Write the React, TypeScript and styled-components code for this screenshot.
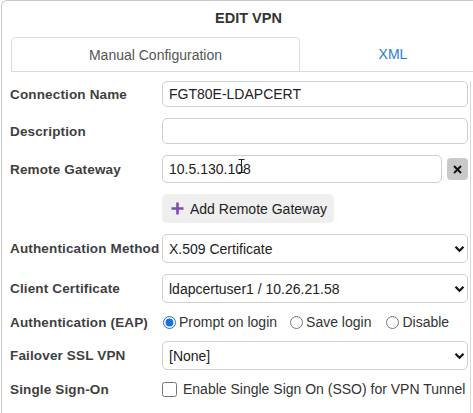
import styled, { createGlobalStyle } from 'styled-components';

const GlobalStyle = createGlobalStyle`
  html, body {
    margin: 0;
    padding: 0;
    background: #fff;
    overflow: hidden;
  }
  body {
    font-family: "Liberation Sans", Arial, sans-serif;
  }
`;

function Chevron() {
  return (
    <svg width="11" height="8" viewBox="0 0 11 8">
      <path d="M1.5 1.8 L5.5 5.8 L9.5 1.8" fill="none" stroke="#111" strokeWidth="2.2" />
    </svg>
  );
}

function Select({ value }: { value: string }) {
  return (
    <SelectWrap>
      <StyledSelect value={value} onChange={() => {}}>
        <option>{value}</option>
      </StyledSelect>
      <Arrow>
        <Chevron />
      </Arrow>
    </SelectWrap>
  );
}

function App() {
  return (
    <>
      <GlobalStyle />
      <Dialog>
        <Title>EDIT VPN</Title>
        <TabBar>
          <Tab $active>Manual Configuration</Tab>
          <Tab>XML</Tab>
        </TabBar>
        <FormBody>
          <Row>
            <Label>Connection Name</Label>
            <TextInput defaultValue="FGT80E-LDAPCERT" />
          </Row>
          <Row>
            <Label>Description</Label>
            <TextInput defaultValue="" />
          </Row>
          <Row>
            <Label>Remote Gateway</Label>
            <GatewayLine>
              <TextInput $h={28} defaultValue="10.5.130.108" />
              <RemoveButton>
                <svg width="9" height="9" viewBox="0 0 9 9">
                  <path d="M1 1 L8 8 M8 1 L1 8" stroke="#111" strokeWidth="2" />
                </svg>
              </RemoveButton>
              <Caret>
                <svg width="7" height="14" viewBox="0 0 7 14">
                  <path d="M0.5 0.5 H6.5 M3.5 0.5 V13.5 M0.5 13.5 H6.5" stroke="#222" strokeWidth="1" fill="none" />
                </svg>
              </Caret>
            </GatewayLine>
          </Row>
          <Row>
            <span />
            <div>
              <AddButton>
                <svg width="13" height="13" viewBox="0 0 13 13">
                  <path d="M6.5 0.5 V12.5 M0.5 6.5 H12.5" stroke="#7a4fae" strokeWidth="2.6" />
                </svg>
                Add Remote Gateway
              </AddButton>
            </div>
          </Row>
          <Row>
            <Label>Authentication Method</Label>
            <Select value="X.509 Certificate" />
          </Row>
          <Row>
            <Label>Client Certificate</Label>
            <Select value="ldapcertuser1 / 10.26.21.58" />
          </Row>
          <Row $h={16}>
            <Label>Authentication (EAP)</Label>
            <Options>
              <Choice $gap={12}>
                <input type="radio" name="eap" defaultChecked />
                Prompt on login
              </Choice>
              <Choice $gap={14}>
                <input type="radio" name="eap" />
                Save login
              </Choice>
              <Choice>
                <input type="radio" name="eap" />
                Disable
              </Choice>
            </Options>
          </Row>
          <Row>
            <Label>Failover SSL VPN</Label>
            <Select value="[None]" />
          </Row>
          <Row $h={16}>
            <Label>Single Sign-On</Label>
            <CheckLine>
              <input type="checkbox" />
              Enable Single Sign On (SSO) for VPN Tunnel
            </CheckLine>
          </Row>
        </FormBody>
      </Dialog>
    </>
  );
}

const Dialog = styled.div`
  width: 494px;
  height: 413px;
  margin-left: 1px;
  border-left: 1px solid #c9c9c9;
  border-top: 1px solid #c9c9c9;
  border-top-left-radius: 6px;
  box-sizing: border-box;
  padding-left: 9px;
  padding-right: 9px;
`;

const Title = styled.div`
  height: 36px;
  line-height: 35px;
  text-align: center;
  font-size: 14.5px;
  font-weight: bold;
  color: #333;
`;

const TabBar = styled.div`
  display: flex;
  height: 34px;
  border-bottom: 1px solid #dcdcdc;
`;

const Tab = styled.div<{ $active?: boolean }>`
  flex: ${(p) => (p.$active ? '0 0 289px' : '1')};
  box-sizing: border-box;
  display: flex;
  align-items: center;
  justify-content: center;
  font-size: 14px;
  color: ${(p) => (p.$active ? '#555' : '#2a7bd6')};
  border: ${(p) => (p.$active ? '1px solid #dcdcdc' : 'none')};
  border-bottom: none;
  border-radius: 5px 5px 0 0;
`;

const FormBody = styled.div`
  width: 461px;
  margin-left: -1px;
  margin-top: 9px;
  padding-right: 2px;
  box-sizing: border-box;
  border-right: 1px solid #d8d8d8;
  height: 340px;
  display: flex;
  flex-direction: column;
  gap: 11px;
`;

const Row = styled.div<{ $h?: number }>`
  display: grid;
  grid-template-columns: 152px 1fr;
  align-items: center;
  min-height: ${(p) => (p.$h ? `${p.$h}px` : 'auto')};
`;

const Label = styled.div`
  font-size: 13.5px;
  font-weight: bold;
  color: #3f3f3f;
  white-space: nowrap;
  letter-spacing: 0.15px;
`;

const TextInput = styled.input<{ $h?: number }>`
  height: ${(p) => p.$h ?? 26}px;
  width: 100%;
  box-sizing: border-box;
  border: 1px solid #cfcfcf;
  border-radius: 5px;
  padding: 0 6px;
  font-family: "Liberation Sans", Arial, sans-serif;
  font-size: 14px;
  color: #222;
  outline: none;
`;

const GatewayLine = styled.div`
  position: relative;
  display: flex;
  align-items: center;
  gap: 5px;
`;

const RemoveButton = styled.button`
  flex: 0 0 21px;
  height: 22px;
  border: none;
  border-radius: 4px;
  background: #c9c9c9;
  display: flex;
  align-items: center;
  justify-content: center;
  padding: 0;
`;

const Caret = styled.span`
  position: absolute;
  left: 76px;
  top: 4px;
  line-height: 0;
`;

const AddButton = styled.button`
  height: 29px;
  padding: 0 7px 0 9px;
  border: none;
  border-radius: 5px;
  background: #efefef;
  display: inline-flex;
  align-items: center;
  gap: 6px;
  font-family: "Liberation Sans", Arial, sans-serif;
  font-size: 14px;
  color: #222;
`;

const SelectWrap = styled.div`
  position: relative;
`;

const StyledSelect = styled.select`
  appearance: none;
  width: 100%;
  height: 29px;
  box-sizing: border-box;
  border: 1px solid #cfcfcf;
  border-radius: 5px;
  padding: 0 26px 0 6px;
  background: #fff;
  font-family: "Liberation Sans", Arial, sans-serif;
  font-size: 14px;
  color: #222;
  outline: none;
`;

const Arrow = styled.span`
  position: absolute;
  right: 3px;
  top: 11px;
  line-height: 0;
  pointer-events: none;
`;

const Options = styled.div`
  display: flex;
  align-items: center;
`;

const Choice = styled.label<{ $gap?: number }>`
  display: inline-flex;
  align-items: center;
  gap: 3px;
  margin-right: ${(p) => p.$gap ?? 0}px;
  font-size: 14px;
  color: #333;
  input {
    margin: 0 0 0 1px;
    width: 13px;
    height: 13px;
    accent-color: #1a6fe0;
  }
`;

const CheckLine = styled.label`
  display: flex;
  align-items: center;
  gap: 6px;
  font-size: 14px;
  color: #333;
  white-space: nowrap;
  input {
    margin: 0;
    width: 15px;
    height: 15px;
  }
`;

export default App;
